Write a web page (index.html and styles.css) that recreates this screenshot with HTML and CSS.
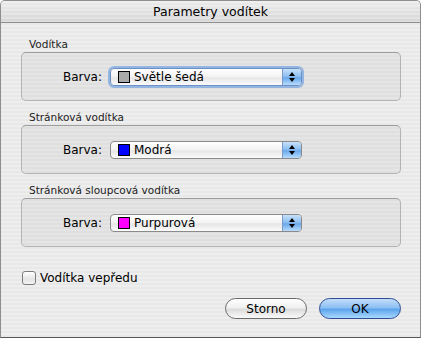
FILE: index.html
```html
<!DOCTYPE html>
<html lang="cs">
<head>
    <meta charset="UTF-8">
    <title>Parametry vodítek</title>
    <link rel="stylesheet" href="styles.css">
</head>
<body>
    <div class="window">
        <div class="titlebar">Parametry vodítek</div>

        <div class="content">
            <div class="group">
                <div class="group-label">Vodítka</div>
                <div class="group-box">
                    <span class="field-label">Barva:</span>
                    <div class="popup focused">
                        <span class="swatch" style="background:#aaaaaa"></span>
                        <span class="popup-text">Světle šedá</span>
                        <span class="popup-arrows"><i class="up"></i><i class="down"></i></span>
                    </div>
                </div>
            </div>

            <div class="group">
                <div class="group-label">Stránková vodítka</div>
                <div class="group-box">
                    <span class="field-label">Barva:</span>
                    <div class="popup">
                        <span class="swatch" style="background:#0000ff"></span>
                        <span class="popup-text">Modrá</span>
                        <span class="popup-arrows"><i class="up"></i><i class="down"></i></span>
                    </div>
                </div>
            </div>

            <div class="group">
                <div class="group-label">Stránková sloupcová vodítka</div>
                <div class="group-box">
                    <span class="field-label">Barva:</span>
                    <div class="popup">
                        <span class="swatch" style="background:#ff00ff"></span>
                        <span class="popup-text">Purpurová</span>
                        <span class="popup-arrows"><i class="up"></i><i class="down"></i></span>
                    </div>
                </div>
            </div>

            <label class="check-row">
                <span class="checkbox"></span>
                <span>Vodítka vepředu</span>
            </label>

            <div class="buttons">
                <button class="btn">Storno</button>
                <button class="btn default">OK</button>
            </div>
        </div>
    </div>
</body>
</html>
```

FILE: styles.css
```css
body {
    margin: 0;
    padding: 0;
    background: #ffffff;
    font-family: 'DejaVu Sans', 'Liberation Sans', sans-serif;
    font-size: 12px;
    color: #000;
}
.window {
    width: 421px;
    height: 338px;
    box-sizing: border-box;
    border: 1px solid #8e8e8e;
    border-bottom-color: #555;
    border-radius: 5px 5px 0 0;
    overflow: hidden;
    background: repeating-linear-gradient(to bottom, #eeeeee 0, #eeeeee 2px, #e8e8e8 2px, #e8e8e8 4px);
    display: flex;
    flex-direction: column;
}
.titlebar {
    height: 21px;
    border-bottom: 1px solid #8f8f8f;
    background:
        repeating-linear-gradient(to bottom, rgba(255,255,255,0.25) 0, rgba(255,255,255,0.25) 2px, transparent 2px, transparent 4px),
        linear-gradient(to bottom, #ebebeb, #d6d6d6);
    text-align: center;
    line-height: 22px;
    font-size: 12.5px;
}
.content {
    padding: 14px 19px 0 20px;
    display: flex;
    flex-direction: column;
    flex: 1;
}
.group {
    margin-bottom: 9px;
}
.group-label {
    font-size: 10.5px;
    line-height: 14px;
    padding-left: 8px;
    margin-bottom: 1px;
    color: #222;
}
.group-box {
    height: 47px;
    border: 1px solid #b3b3b3;
    border-top-color: #9c9c9c;
    border-radius: 5px;
    background: rgba(0, 0, 0, 0.035);
    display: flex;
    align-items: center;
}
.field-label {
    width: 80px;
    text-align: right;
    margin-right: 8px;
}
.popup {
    width: 192px;
    height: 18px;
    box-sizing: border-box;
    border: 1px solid #8a8a8a;
    border-radius: 4px;
    background: linear-gradient(to bottom, #ffffff 0%, #f2f2f2 50%, #e6e6e6 55%, #fbfbfb 100%);
    display: flex;
    align-items: center;
    overflow: hidden;
}
.popup.focused {
    border-color: #6d8fc4;
    box-shadow: 0 0 0 2px rgba(120, 165, 225, 0.75);
}
.swatch {
    width: 10px;
    height: 10px;
    border: 1px solid #000;
    margin-left: 7px;
    margin-right: 4px;
}
.popup-text {
    flex: 1;
}
.popup-arrows {
    width: 18px;
    height: 100%;
    border-left: 1px solid #7b9acb;
    background: linear-gradient(to bottom, #c7e0fa 0%, #8ec0f2 45%, #6aa8ec 55%, #b7dcfc 100%);
    display: flex;
    flex-direction: column;
    align-items: center;
    justify-content: center;
    gap: 2px;
}
.popup-arrows i {
    width: 0;
    height: 0;
    border-left: 3px solid transparent;
    border-right: 3px solid transparent;
}
.popup-arrows .up {
    border-bottom: 4px solid #000;
}
.popup-arrows .down {
    border-top: 4px solid #000;
}
.check-row {
    display: flex;
    align-items: center;
    margin-top: 15px;
    margin-left: 1px;
    height: 14px;
}
.checkbox {
    width: 14px;
    height: 14px;
    box-sizing: border-box;
    border: 1px solid #7d7d7d;
    border-radius: 3px;
    background: linear-gradient(to bottom, #ffffff, #e4e4e4 60%, #f4f4f4);
    margin-right: 4px;
}
.buttons {
    display: flex;
    justify-content: flex-end;
    gap: 12px;
    margin-top: 13px;
}
.btn {
    width: 82px;
    height: 21px;
    border: 1px solid #6b6b6b;
    border-radius: 11px;
    background: linear-gradient(to bottom, #ffffff 0%, #f0f0f0 45%, #dcdcdc 55%, #fafafa 100%);
    font-family: inherit;
    font-size: 12px;
    color: #000;
    padding: 0;
}
.btn.default {
    border-color: #2f4c96;
    background: linear-gradient(to bottom, #c3defa 0%, #8dc0f3 45%, #5ea4ec 55%, #a9dafe 100%);
}
```
